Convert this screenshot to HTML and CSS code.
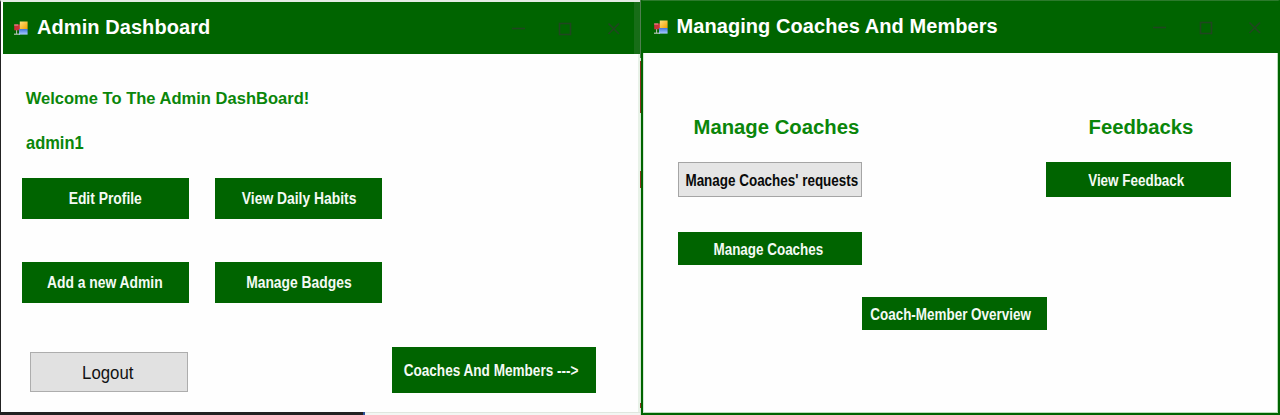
FILE: index.html
```html
<!DOCTYPE html>
<html lang="en">
<head>
<meta charset="utf-8">
<title>Admin Dashboard</title>
<link rel="stylesheet" href="styles.css">
</head>
<body>
<svg class="defs" width="0" height="0" aria-hidden="true">
  <defs>
    <linearGradient id="gold" x1="0" y1="0" x2="1" y2="1"><stop offset="0" stop-color="#ffe07a"/><stop offset="1" stop-color="#f0a000"/></linearGradient>
    <linearGradient id="blue" x1="0" y1="0" x2="0" y2="1"><stop offset="0" stop-color="#3f74d8"/><stop offset="1" stop-color="#a9ccff"/></linearGradient>
    <symbol id="app-icon" viewBox="0 0 14 14">
      <path d="M0 13.2h6" stroke="#b9c4b9" stroke-width="1.2"/>
      <path d="M2.6 8v5" stroke="#b9c4b9" stroke-width="1"/>
      <rect x="0.2" y="3.5" width="5.8" height="5.8" fill="#c8323a"/>
      <path d="M0.2 4h4" stroke="#e9a0a0" stroke-width="1"/>
      <rect x="5.8" y="0.5" width="7.8" height="7.7" fill="url(#gold)"/>
      <rect x="5" y="8" width="8.6" height="5.6" fill="url(#blue)"/>
    </symbol>
    <symbol id="controls" viewBox="0 0 112 16">
      <g fill="none" stroke="#204620" stroke-width="1.6">
        <path d="M1 8.5h13"/>
        <rect x="48.5" y="3.5" width="11" height="11"/>
        <path d="M97.5 3.5l10.5 10.5M108 3.5L97.5 14"/>
      </g>
    </symbol>
  </defs>
</svg>
<div class="desktop">
  <section class="window dashboard">
    <header class="titlebar">
      <svg class="app-icon"><use href="#app-icon"/></svg>
      <h1 class="title">Admin Dashboard</h1>
      <svg class="controls"><use href="#controls"/></svg>
    </header>
    <main class="content">
      <p class="welcome">Welcome To The Admin DashBoard!</p>
      <p class="user"><span class="narrow">admin1</span></p>
      <div class="actions">
        <button class="btn"><span class="label">Edit Profile</span></button>
        <button class="btn"><span class="label">View Daily Habits</span></button>
        <button class="btn"><span class="label">Add a new Admin</span></button>
        <button class="btn"><span class="label">Manage Badges</span></button>
      </div>
      <div class="bottom">
        <button class="btn logout"><span class="label">Logout</span></button>
        <button class="btn next"><span class="label">Coaches And Members ---&gt;</span></button>
      </div>
    </main>
    <footer class="taskbar"><span class="dark"></span><span class="light"></span></footer>
  </section>
  <div class="divider"><i class="mark tall"></i><i class="mark short"></i><i class="mark tiny"></i></div>
  <section class="window coaches">
    <header class="titlebar">
      <svg class="app-icon"><use href="#app-icon"/></svg>
      <h1 class="title">Managing Coaches And Members</h1>
      <svg class="controls"><use href="#controls"/></svg>
    </header>
    <main class="board">
      <div class="column">
        <h2 class="heading">Manage Coaches</h2>
        <button class="btn requests"><span class="label">Manage Coaches' requests</span></button>
        <button class="btn manage"><span class="label">Manage Coaches</span></button>
      </div>
      <div class="column middle">
        <button class="btn overview"><span class="label">Coach-Member Overview</span></button>
      </div>
      <div class="column">
        <h2 class="heading feedback">Feedbacks</h2>
        <button class="btn view"><span class="label">View Feedback</span></button>
      </div>
    </main>
  </section>
</div>
</body>
</html>
```

FILE: styles.css
```css
* { box-sizing: border-box; }
body { margin: 0; background: #fff; font-family: "Liberation Sans", Arial, sans-serif; overflow: hidden; }
h1, h2, p { margin: 0; }
.defs { display: block; height: 0; }
.desktop { display: grid; grid-template-columns: 640px 1px 639px; height: 415px; }
.window { display: flex; flex-direction: column; min-width: 0; height: 415px; background: #fefefe; }

.titlebar { display: flex; align-items: center; flex: none; background: #006400; }
.app-icon { width: 14px; height: 14px; margin-right: 9px; flex: none; }
.title { font-size: 20px; line-height: 24px; font-weight: bold; color: #fff; white-space: nowrap; letter-spacing: 0.07px; }
.controls { width: 112px; height: 16px; margin-left: auto; flex: none; }

.dashboard { border-left: 1px solid #222; border-top: 2px solid #e4ece4; }
.dashboard .titlebar { height: 52px; margin-left: 2px; padding: 0 11px 0 11px; border-right: 6px solid #176d17; }
.dashboard .title { margin-top: -3px; }
.content { flex: 1; padding: 34px 0 0 20.7px; border-right: 2px solid #e8f2e8; }
.welcome { padding-left: 4px; font-size: 16.5px; line-height: 20px; font-weight: bold; color: #0a860a; white-space: nowrap; letter-spacing: 0.02px; }
.user { margin-top: 24px; padding-left: 4px; font-size: 18.5px; line-height: 22px; font-weight: bold; color: #0a860a; }
.narrow { display: inline-block; transform: scaleX(0.89); transform-origin: left; }
.actions { display: grid; grid-template-columns: 167px 167px; grid-auto-rows: 40.5px; gap: 43.5px 26.7px; margin-top: 24px; }

.btn { display: flex; align-items: center; justify-content: center; margin: 0; padding: 0; border: 0; border-radius: 0; background: #006400; color: #f4faf4; font: bold 16px/18px "Liberation Sans", Arial, sans-serif; white-space: nowrap; }
.label { flex: none; transform: scaleX(0.866); }
.actions .btn { padding-top: 2px; }

.bottom { display: flex; align-items: flex-start; margin-top: 44.5px; padding-left: 8px; }
.logout { width: 158px; height: 39.5px; margin-top: 5px; padding-right: 2px; padding-top: 2px; background: #e1e1e1; border: 1px solid #adadad; color: #111; font-size: 17.5px; font-weight: normal; }
.logout .label { transform: scaleX(0.96); }
.next { width: 204px; height: 45.7px; margin-left: 204.5px; padding-right: 7px; padding-top: 3px; }
.next .label { transform: scaleX(0.848); }
.taskbar { display: flex; height: 3px; flex: none; }
.dark { width: 364px; background: #222; border-right: 2px solid #2a4f9a; }
.light { flex: 1; background: #f3f6f3; border-top: 1px solid #dfe6df; }

.divider { display: flex; flex-direction: column; background: #d7e8d7; border-top: 58px solid #4f7f4f; }
.mark { display: block; background: #8c3022; }
.tall { height: 52px; margin-top: 3px; }
.short { height: 17px; margin-top: 58px; }
.tiny { height: 5px; margin-top: 215px; }

.coaches { border: 2px solid #006400; border-top: 1px solid #2c7a2c; }
.coaches .titlebar { height: 52px; padding: 0 14px 0 10.5px; }
.coaches .title { margin-top: -2px; }
.board { display: grid; grid-template-columns: 184.5px 184px 184.5px; flex: 1; padding-left: 33.5px; border-right: 1px solid #b8dcb8; border-bottom: 1px solid #b8dcb8; border-left: 1px solid #d7e8d7; }
.board .label { transform: scaleX(0.84); }
.board .btn { width: 184.5px; }
.heading { margin-top: 62px; font-size: 20.3px; line-height: 24px; font-weight: bold; color: #0a860a; white-space: nowrap; padding-left: 16px; }
.heading.feedback { padding-left: 42.5px; }
.board .requests { height: 35px; margin-top: 22.5px; padding-left: 5px; padding-top: 3px; background: #e5e5e5; border: 1px solid #a5a5a5; color: #0a0a0a; }
.board .manage { height: 33px; margin-top: 35.5px; padding-right: 3px; padding-top: 2px; }
.board .overview { height: 33px; margin-top: 244px; padding-right: 8px; padding-top: 2px; }
.board .view { height: 35px; margin-top: 22.5px; padding-right: 4px; padding-top: 3px; }
```
